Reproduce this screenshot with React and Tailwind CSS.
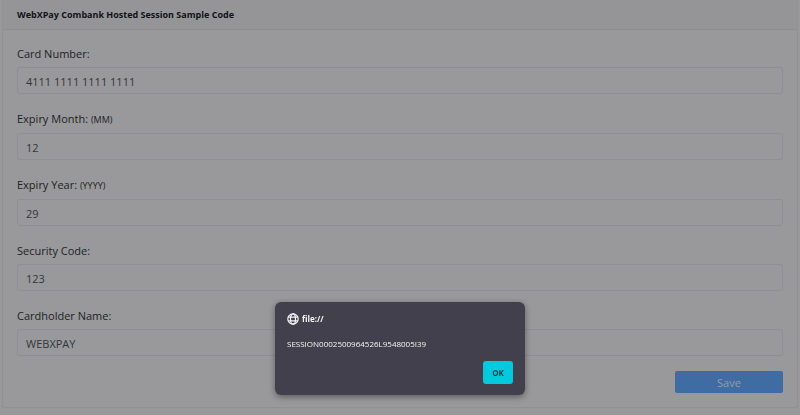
const fields = [
  { id: 'card-number', label: 'Card Number:', value: '4111 1111 1111 1111' },
  { id: 'expiry-month', label: 'Expiry Month:', hint: '(MM)', value: '12' },
  { id: 'expiry-year', label: 'Expiry Year:', hint: '(YYYY)', value: '29' },
  { id: 'security-code', label: 'Security Code:', value: '123' },
  { id: 'cardholder-name', label: 'Cardholder Name:', value: 'WEBXPAY' },
];

function Field({ id, label, hint, value }) {
  return (
    <div className="flex flex-col gap-1">
      <label htmlFor={id} className="text-[11px] leading-[18px] text-[#1c1f24]">
        {label} {hint && <small className="text-[9px]">{hint}</small>}
      </label>
      <input
        id={id}
        type="text"
        defaultValue={value}
        className="h-[27px] w-full rounded-[3px] border border-[#8e8f92] bg-transparent px-2 pt-0.5 text-[11px] text-[#32363c] outline-none"
      />
    </div>
  );
}

function GlobeIcon() {
  return (
    <svg viewBox="0 0 12 12" className="size-3" fill="none" stroke="currentColor" strokeWidth="1.2" aria-hidden="true">
      <circle cx="6" cy="6" r="5.2" />
      <ellipse cx="6" cy="6" rx="2.5" ry="5.2" />
      <path d="M1.2 4.2h9.6M1.2 7.8h9.6" />
    </svg>
  );
}

export default function App() {
  return (
    <div className="min-h-screen bg-[#99999b] px-0.5 pb-2 font-['Open_Sans','Noto_Sans',sans-serif]">
      <main className="rounded-b-[3px] border border-t-0 border-[#909193]">
        <header className="border-b border-[#8d8e90] bg-[#959597] px-3.5 pt-1.5 pb-[5px]">
          <h1 className="text-[9px] leading-[18px] font-bold text-[#101216]">
            WebXPay Combank Hosted Session Sample Code
          </h1>
        </header>
        <form className="flex flex-col gap-4 px-3.5 pt-[15px] pb-3.5" onSubmit={(e) => e.preventDefault()}>
          {fields.map((field) => (
            <Field key={field.id} {...field} />
          ))}
          <button
            type="submit"
            className="-mt-px h-[22px] w-[108px] self-end rounded-[2px] bg-[#3f6ca2] pt-0.5 text-[11px] text-[#9b9da2]"
          >
            Save
          </button>
        </form>
      </main>

      <div className="fixed inset-x-0 bottom-5 flex justify-center">
        <section
          role="alertdialog"
          aria-labelledby="dialog-title"
          aria-describedby="dialog-message"
          className="flex w-[250px] flex-col rounded-[6px] bg-[#42404d] px-3 pt-[9px] pb-[11px] text-[#f4f4f6] shadow-[0_2px_6px_rgba(0,0,0,0.4)]"
        >
          <h2 id="dialog-title" className="flex items-center gap-[3px] text-[8px] leading-4 font-bold">
            <GlobeIcon />
            file://
          </h2>
          <p id="dialog-message" className="mt-[9px] text-[8px] leading-4">
            SESSION0002500964526L9548005I39
          </p>
          <button
            type="button"
            className="mt-[9px] h-[23px] w-[30px] self-end rounded-[3px] bg-[#00cadb] text-[8px] font-bold text-[#1c3c48]"
          >
            OK
          </button>
        </section>
      </div>
    </div>
  );
}
